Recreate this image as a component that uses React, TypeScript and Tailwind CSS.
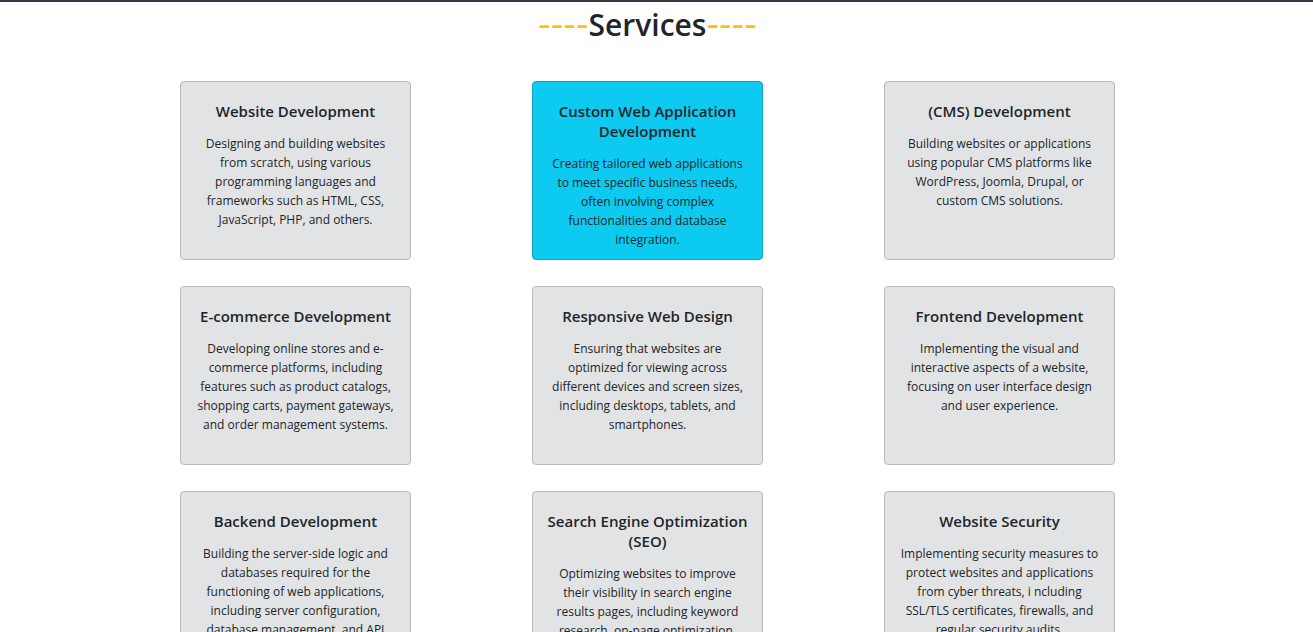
type Service = { title: string; text: string; active?: boolean };

const services: Service[] = [
  {
    title: "Website Development",
    text: "Designing and building websites from scratch, using various programming languages and frameworks such as HTML, CSS, JavaScript, PHP, and others.",
  },
  {
    title: "Custom Web Application Development",
    text: "Creating tailored web applications to meet specific business needs, often involving complex functionalities and database integration.",
    active: true,
  },
  {
    title: "(CMS) Development",
    text: "Building websites or applications using popular CMS platforms like WordPress, Joomla, Drupal, or custom CMS solutions.",
  },
  {
    title: "E-commerce Development",
    text: "Developing online stores and e-commerce platforms, including features such as product catalogs, shopping carts, payment gateways, and order management systems.",
  },
  {
    title: "Responsive Web Design",
    text: "Ensuring that websites are optimized for viewing across different devices and screen sizes, including desktops, tablets, and smartphones.",
  },
  {
    title: "Frontend Development",
    text: "Implementing the visual and interactive aspects of a website, focusing on user interface design and user experience.",
  },
  {
    title: "Backend Development",
    text: "Building the server-side logic and databases required for the functioning of web applications, including server configuration, database management, and API",
  },
  {
    title: "Search Engine Optimization (SEO)",
    text: "Optimizing websites to improve their visibility in search engine results pages, including keyword research, on-page optimization,",
  },
  {
    title: "Website Security",
    text: "Implementing security measures to protect websites and applications from cyber threats, i ncluding SSL/TLS certificates, firewalls, and regular security audits.",
  },
];

function ServiceCard({ title, text, active }: Service) {
  return (
    <article
      className={`min-h-[179px] w-[231px] rounded border px-3 pt-[19px] pb-2 text-center ${
        active ? "border-[#0da6c2] bg-[#0dcaf0]" : "border-[#b8babc] bg-[#e2e3e5]"
      }`}
    >
      <h2 className="mb-[13px] text-[15px] leading-5 font-semibold">{title}</h2>
      <p className="text-xs leading-[19px]">{text}</p>
    </article>
  );
}

function Dashes() {
  return (
    <span className="font-['DejaVu_Sans',sans-serif] text-[35px] leading-none font-normal text-[#ffc107]">
      ----
    </span>
  );
}

export default function App() {
  return (
    <main className="border-t-2 border-[#393346] bg-white pr-[18px] font-['Open_Sans','Noto_Sans',sans-serif] text-[#212529]">
      <h1 className="pt-1 text-center text-[30px] leading-[38px] font-semibold">
        <Dashes />
        Services
        <Dashes />
      </h1>
      <section className="mx-auto mt-[37px] grid max-w-[1056px] grid-cols-3 justify-items-center gap-y-[26px]">
        {services.map((service) => (
          <ServiceCard key={service.title} {...service} />
        ))}
      </section>
    </main>
  );
}
